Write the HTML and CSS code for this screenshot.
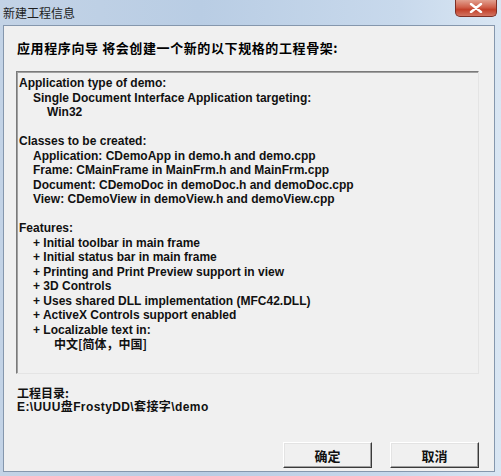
FILE: index.html
```html
<!DOCTYPE html>
<html lang="zh-CN">
<head>
<meta charset="UTF-8">
<title>新建工程信息</title>
<link rel="stylesheet" href="styles.css">
</head>
<body>
<div class="window">
<div class="titlebar">
<span class="title">新建工程信息</span>
<div class="closeBtn">
<svg width="16" height="10" viewBox="0 0 16 10"><path d="M3 1 L13 9 M13 1 L3 9" stroke="#fff" stroke-width="2.4" stroke-linecap="round"/></svg>
</div>
</div>
<div class="client">
<p class="heading">应用程序向导 将会创建一个新的以下规格的工程骨架:</p>
<div class="infoBox">
<p>Application type of demo:</p>
<p class="in1">Single Document Interface Application targeting:</p>
<p class="in2">Win32</p>
<p>&nbsp;</p>
<p>Classes to be created:</p>
<p class="in1">Application: CDemoApp in demo.h and demo.cpp</p>
<p class="in1">Frame: CMainFrame in MainFrm.h and MainFrm.cpp</p>
<p class="in1">Document: CDemoDoc in demoDoc.h and demoDoc.cpp</p>
<p class="in1">View: CDemoView in demoView.h and demoView.cpp</p>
<p>&nbsp;</p>
<p>Features:</p>
<p class="in1">+ Initial toolbar in main frame</p>
<p class="in1">+ Initial status bar in main frame</p>
<p class="in1">+ Printing and Print Preview support in view</p>
<p class="in1">+ 3D Controls</p>
<p class="in1">+ Uses shared DLL implementation (MFC42.DLL)</p>
<p class="in1">+ ActiveX Controls support enabled</p>
<p class="in1">+ Localizable text in:</p>
<p class="in3 cjk">中文[简体，中国]</p>
</div>
<div class="dirInfo">
<p class="cjk">工程目录:</p>
<p class="path">E:\UUU盘FrostyDD\套接字\demo</p>
</div>
<div class="buttons">
<button class="btn">确定</button>
<button class="btn">取消</button>
</div>
</div>
</div>
</body>
</html>
```

FILE: styles.css
```css
* {
margin: 0;
padding: 0;
}
body {
background: #f0f0f0;
font-family: "Liberation Sans", Arial, "Noto Sans CJK SC", sans-serif;
}
.window {
width: 501px;
height: 476px;
display: flex;
flex-direction: column;
background: linear-gradient(to right, #c3d3e6, #b9cde4 40%, #c8d9ec 80%, #d9e6f3);
}
.titlebar {
height: 25px;
display: flex;
justify-content: space-between;
align-items: flex-start;
}
.title {
font-family: "Noto Sans CJK SC", sans-serif;
font-size: 12px;
color: #1e1e1e;
padding: 4px 0 0 3px;
line-height: 17px;
}
.closeBtn {
width: 40px;
height: 16px;
margin-right: 4px;
border: 1px solid #7e2f25;
border-top: 0;
border-radius: 0 0 5px 5px;
background: linear-gradient(#e2a08f, #d0604b 45%, #c2402a 60%, #d27461);
display: flex;
justify-content: center;
align-items: center;
}
.client {
flex: 1;
margin: 0 6px 4px 3px;
border: 1px solid #8597ad;
background: #f0f0f0;
padding: 0 15px 0 12px;
display: flex;
flex-direction: column;
}
.heading {
font-family: "Noto Sans CJK SC", sans-serif;
font-weight: bold;
font-size: 13px;
letter-spacing: 0.6px;
line-height: 18px;
margin: 13px 0 0 1px;
color: #000;
}
.infoBox {
margin-top: 14px;
height: 297px;
border: 1px solid;
border-color: #7a7a7a #e4e4e4 #e4e4e4 #7a7a7a;
box-shadow: inset 1px 1px 0 #a0a0a0;
padding: 4px 0 0 2px;
font-weight: bold;
font-size: 12px;
line-height: 14.5px;
color: #111;
}
.in1 {
padding-left: 14px;
}
.in2 {
padding-left: 28px;
}
.in3 {
padding-left: 35px;
}
.cjk {
font-family: "Noto Sans CJK SC", sans-serif;
}
.dirInfo {
margin: 12px 0 0 1px;
font-weight: bold;
font-size: 12px;
line-height: 14px;
color: #111;
}
.path {
letter-spacing: 0.4px;
}
.buttons {
margin-top: 28px;
display: flex;
justify-content: flex-end;
gap: 18px;
}
.btn {
width: 89px;
height: 26px;
background: #f0f0f0;
border: 1px solid;
border-color: #fff #3a3a3a #3a3a3a #fff;
box-shadow: inset -1px -1px 0 #a0a0a0, inset 1px 1px 0 #e3e3e3;
font-family: "Noto Sans CJK SC", sans-serif;
font-weight: bold;
font-size: 13px;
color: #111;
}
```
